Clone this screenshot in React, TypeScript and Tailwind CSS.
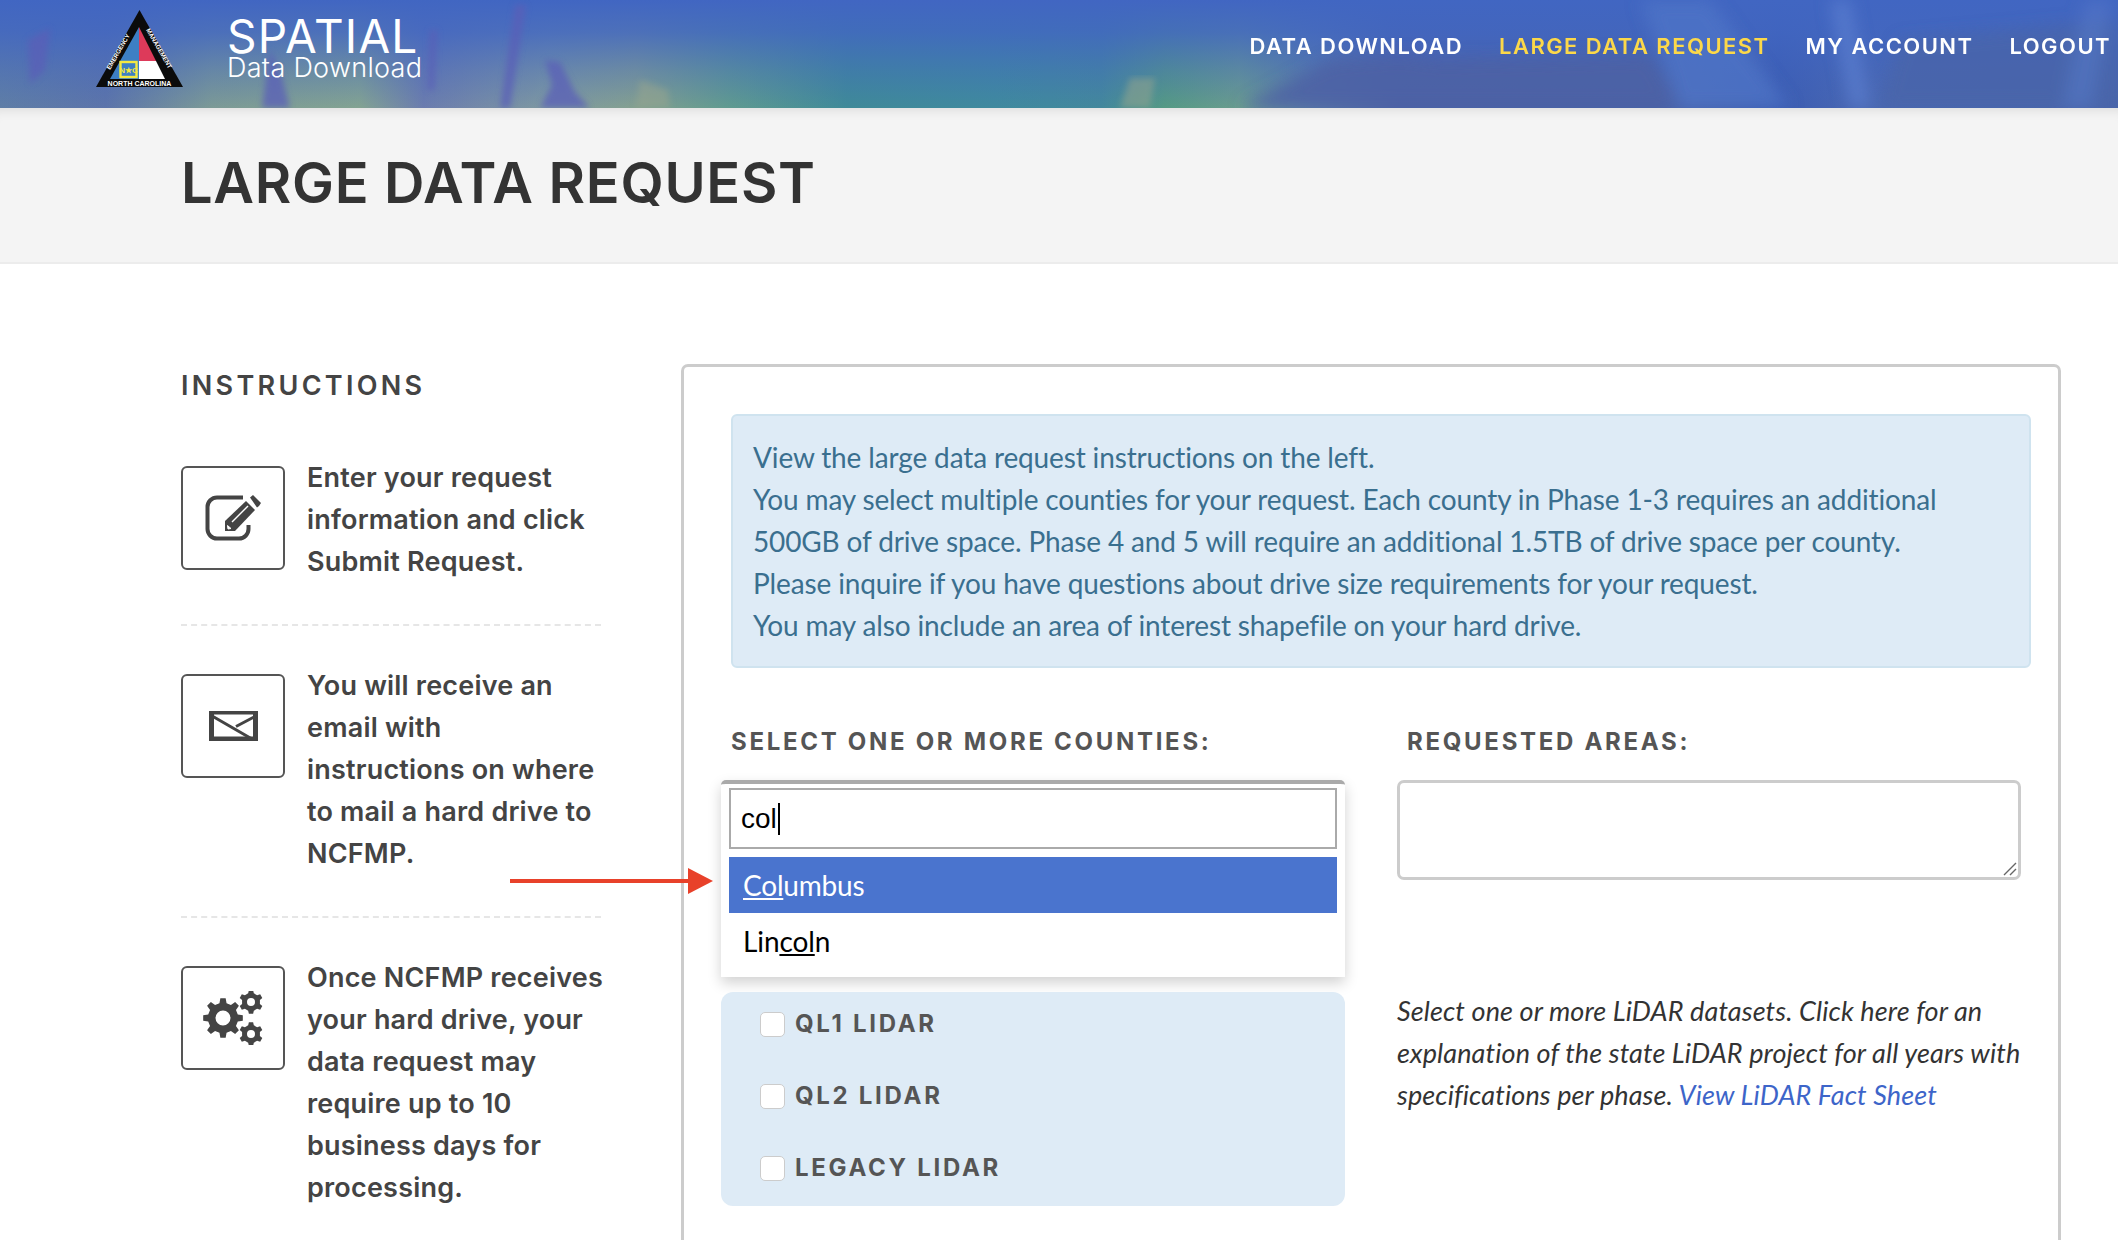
const steps = [
  { lines: ["Enter your request", "information and click", "Submit Request."], icon: "edit" },
  { lines: ["You will receive an", "email with", "instructions on where", "to mail a hard drive to", "NCFMP."], icon: "mail" },
  { lines: ["Once NCFMP receives", "your hard drive, your", "data request may", "require up to 10", "business days for", "processing."], icon: "gears" },
];

// gear outline with a hole, used by the third step icon
function gearPath(cx: number, cy: number, r: number, teeth: number, hole: number) {
  const inner = r * 0.76;
  const step = (Math.PI * 2) / teeth;
  const pts: string[] = [];
  for (let i = 0; i < teeth; i++) {
    const a = i * step - Math.PI / 2;
    const list: [number, number][] = [
      [inner, a - step * 0.3],
      [r, a - step * 0.17],
      [r, a + step * 0.17],
      [inner, a + step * 0.3],
    ];
    list.forEach(([rad, ang]) => pts.push(`${(cx + rad * Math.cos(ang)).toFixed(2)} ${(cy + rad * Math.sin(ang)).toFixed(2)}`));
  }
  return `M${pts.join("L")}Z M${cx - hole} ${cy}a${hole} ${hole} 0 1 0 ${hole * 2} 0a${hole} ${hole} 0 1 0 ${-hole * 2} 0Z`;
}

function HeaderTexture() {
  return (
    <svg className="absolute inset-0 w-full h-full" viewBox="0 0 2118 108" preserveAspectRatio="none">
      <defs>
        <filter id="b2"><feGaussianBlur stdDeviation="3" /></filter>
        <filter id="b6"><feGaussianBlur stdDeviation="8" /></filter>
        <linearGradient id="bottom" x1="0" y1="0" x2="1" y2="0">
          <stop offset="0" stopColor="#5f7ea6" />
          <stop offset="0.05" stopColor="#5c74aa" />
          <stop offset="0.1" stopColor="#7c9a96" />
          <stop offset="0.17" stopColor="#83a392" />
          <stop offset="0.2" stopColor="#6b7cae" />
          <stop offset="0.26" stopColor="#7f9aa0" />
          <stop offset="0.3" stopColor="#84a090" />
          <stop offset="0.345" stopColor="#5f9a90" />
          <stop offset="0.4" stopColor="#3f8a98" />
          <stop offset="0.47" stopColor="#3f8a9e" />
          <stop offset="0.52" stopColor="#43889c" />
          <stop offset="0.55" stopColor="#559a84" />
          <stop offset="0.585" stopColor="#6a9c8e" />
          <stop offset="0.62" stopColor="#5b7da6" />
          <stop offset="0.66" stopColor="#4c62a6" />
          <stop offset="0.78" stopColor="#4862a6" />
          <stop offset="0.8" stopColor="#4a66ae" />
          <stop offset="0.84" stopColor="#3b5cb2" />
          <stop offset="0.88" stopColor="#4a68b2" />
          <stop offset="1" stopColor="#4a66aa" />
        </linearGradient>
        <linearGradient id="topfade" x1="0" y1="0" x2="0" y2="1">
          <stop offset="0" stopColor="#4166c2" stopOpacity="1" />
          <stop offset="0.3" stopColor="#4166c2" stopOpacity="0.82" />
          <stop offset="0.65" stopColor="#4166c2" stopOpacity="0.38" />
          <stop offset="1" stopColor="#4166c2" stopOpacity="0" />
        </linearGradient>
      </defs>
      <rect width="2118" height="108" fill="url(#bottom)" />
      <rect width="2118" height="108" fill="url(#topfade)" />
      <g filter="url(#b2)" fill="#5a5fb8" opacity="0.75">
        <path d="M28 40 L50 28 L45 70 L30 84Z" />
        <path d="M430 30 L437 30 L434 90 L428 90Z" />
        <path d="M515 5 L526 5 L510 108 L500 108Z" />
        <path d="M545 60 L560 62 L575 92 L590 108 L540 108 L552 85Z" />
        <path d="M270 50 L280 70 L290 108 L262 108Z" />
      </g>
      <g filter="url(#b6)">
        <path d="M1240 108 L1330 60 L1400 55 L1440 60 L1650 55 L1680 108Z" fill="#4c62a4" opacity="0.85" />
        <path d="M1640 0 L1710 0 L1790 108 L1680 108Z" fill="#5075c8" opacity="0.7" />
        <path d="M1830 0 L1850 0 L1870 108 L1850 108Z" fill="#5c7fd0" opacity="0.7" />
        <path d="M1900 40 L2118 20 L2118 108 L1880 108Z" fill="#4a65a8" opacity="0.7" />
        <path d="M2085 0 L2112 0 L2092 108 L2062 108Z" fill="#5578c8" opacity="0.55" />
      </g>
      <g filter="url(#b2)" fill="#9aa68e" opacity="0.5">
        <path d="M1130 78 L1155 78 L1150 108 L1120 108Z" />
        <path d="M640 80 L668 90 L670 108 L636 108Z" />
      </g>
    </svg>
  );
}

function Logo() {
  return (
    <svg width="88" height="78" viewBox="0 0 88 78" className="shrink-0">
      <polygon points="43.5,0 87,77 0,77" fill="#0b0b0b" />
      <polygon points="43,17 43,69 14,69" fill="#3d7fc4" />
      <polygon points="43,17 43,51 60,51" fill="#dd3a5a" />
      <polygon points="43,51 60,51 69,69 43,69" fill="#fff" />
      <rect x="24.5" y="52" width="16" height="15" fill="#3d7fc4" stroke="#f4e842" strokeWidth="2.4" />
      <text x="32.5" y="62.5" fontSize="8" fontWeight="700" textAnchor="middle" fill="#f4e842" fontFamily="'Liberation Sans', sans-serif">N★C</text>
      <text x="43.5" y="75.5" fontSize="7" fontWeight="700" textAnchor="middle" fill="#fff" fontFamily="'Liberation Sans', sans-serif">NORTH CAROLINA</text>
      <text transform="translate(14 60) rotate(-60)" fontSize="6.2" fontWeight="700" fill="#fff" fontFamily="'Liberation Sans', sans-serif">EMERGENCY</text>
      <text transform="translate(50 20) rotate(60)" fontSize="6.2" fontWeight="700" fill="#fff" fontFamily="'Liberation Sans', sans-serif">MANAGEMENT</text>
    </svg>
  );
}

function StepIcon({ icon }: { icon: string }) {
  return (
    <div className="w-[104px] h-[104px] shrink-0 mt-[9px] border-2 border-[#555] rounded-[6px] flex items-center justify-center">
      {icon === "edit" && (
        <svg width="56" height="46" viewBox="0 0 56 46">
          <path d="M38 2.5H12A9.5 9.5 0 0 0 2.5 12V34A9.5 9.5 0 0 0 12 43.5H34A9.5 9.5 0 0 0 43.5 34V30" fill="none" stroke="#444" strokeWidth="4" />
          <path d="M20 26L41 6L50 15L30 36H20Z" fill="#444" />
          <path d="M45 2.5L48 0L56 8L54 11L52 12.5Z" fill="#444" />
          <path d="M27 27L43 11" stroke="#fff" strokeWidth="1.4" />
          <path d="M22.5 30.5L26 33.5L23 34Z" fill="#fff" stroke="#fff" strokeWidth="1" />
        </svg>
      )}
      {icon === "mail" && (
        <svg width="49" height="30" viewBox="0 0 49 30">
          <rect width="49" height="30" fill="#444" />
          <rect x="5" y="3.5" width="39" height="22" fill="#fff" />
          <path d="M4 5.5L43 28M45 6L27 15.5" stroke="#444" strokeWidth="3" fill="none" />
        </svg>
      )}
      {icon === "gears" && (
        <svg width="60" height="54" viewBox="0 0 60 54">
          <path fillRule="evenodd" fill="#444" d={gearPath(20, 27, 20, 8, 7.5)} />
          <path fillRule="evenodd" fill="#444" d={gearPath(48, 11, 12, 6, 4)} />
          <path fillRule="evenodd" fill="#444" d={gearPath(48, 43, 12, 6, 4)} />
        </svg>
      )}
    </div>
  );
}

export default function App() {
  return (
    <div className="h-[1240px] overflow-hidden relative bg-white font-['Inter',sans-serif]">
      <header className="relative h-[108px] overflow-hidden flex items-start text-white">
        <HeaderTexture />
        <div className="relative flex items-start pl-[96px] pt-[10px] gap-[43px]">
          <Logo />
          <div className="pt-[8px]">
            <div className="text-[46px] leading-[37px] font-normal tracking-[1.2px]">SPATIAL</div>
            <div className="text-[27px] leading-[25px] font-light tracking-[0.3px]">Data Download</div>
          </div>
        </div>
        <nav className="relative ml-auto pr-[7px] pt-[32px] flex gap-[36px] text-[22px] leading-[28px] font-semibold tracking-[1.45px]">
          <span>DATA DOWNLOAD</span>
          <span className="text-[#fcd849]">LARGE DATA REQUEST</span>
          <span>MY ACCOUNT</span>
          <span>LOGOUT</span>
        </nav>
      </header>

      <div className="h-[156px] bg-[#f4f4f4] border-b-2 border-[#ececec] pl-[181px] pt-[41px] shadow-[inset_0_12px_12px_-10px_rgba(0,0,0,0.1)]">
        <h1 className="text-[56px] leading-[68px] font-semibold text-[#333] tracking-[0.7px]">LARGE DATA REQUEST</h1>
      </div>

      <main className="flex pl-[181px] pt-[100px]">
        <aside className="w-[420px] shrink-0">
          <h2 className="text-[27px] leading-[44px] font-semibold text-[#444] tracking-[3.3px]">INSTRUCTIONS</h2>
          <div className="mt-[49px]">
            {steps.map((step, idx) => (
              <div key={idx} className={idx < 2 ? "flex gap-[22px] pb-[41px] mb-[39px] border-b-2 border-dashed border-[#e6e6e6]" : "flex gap-[22px]"}>
                <StepIcon icon={step.icon} />
                <div className="text-[27px] leading-[42px] font-semibold text-[#444] tracking-[0.2px] whitespace-nowrap">
                  {step.lines.map((l) => <div key={l}>{l}</div>)}
                </div>
              </div>
            ))}
          </div>
        </aside>

        <section className="ml-[80px] w-[1380px] h-[1000px] shrink-0 border-[3px] border-[#ccc] rounded-[7px] pl-[37px] pt-[47px] font-['Lato',sans-serif]">
          <div className="ml-[10px] w-[1300px] h-[254px] bg-[#deebf6] border-2 border-[#cfe3ef] rounded-[6px] pl-[20px] pt-[20px] text-[28px] leading-[42px] text-[#3a6f8f] tracking-[-0.14px] whitespace-nowrap">
            <div>View the large data request instructions on the left.</div>
            <div>You may select multiple counties for your request. Each county in Phase 1-3 requires an additional</div>
            <div>500GB of drive space. Phase 4 and 5 will require an additional 1.5TB of drive space per county.</div>
            <div>Please inquire if you have questions about drive size requirements for your request.</div>
            <div>You may also include an area of interest shapefile on your hard drive.</div>
          </div>

          <div className="flex gap-[52px] mt-[57px]">
            <div className="w-[624px] shrink-0">
              <div className="ml-[10px] h-[34px] text-[24px] leading-[34px] font-bold text-[#555] tracking-[2.7px] font-['Inter',sans-serif] whitespace-nowrap">SELECT ONE OR MORE COUNTIES:</div>
              <div className="mt-[21px] h-[197px] bg-white border-t-[4px] border-[#aaa] rounded-t-[5px] px-[8px] pt-[4px] shadow-[0_6px_14px_rgba(0,0,0,0.18)]">
                <div className="h-[61px] border-2 border-[#aaa] flex items-center pl-[10px] text-[28px] text-black font-['Liberation_Sans',sans-serif]">
                  col<span className="w-[2px] h-[32px] bg-black ml-[1px]" />
                </div>
                <div className="mt-[8px] h-[56px] bg-[#4a74ce] text-white flex items-center pl-[14px] text-[28px] tracking-[-0.2px]">
                  <span><u>Col</u>umbus</span>
                </div>
                <div className="h-[56px] text-black flex items-center pl-[14px] text-[28px] tracking-[-0.1px]">
                  <span>Lin<u>col</u>n</span>
                </div>
              </div>

              <div className="mt-[15px] h-[214px] bg-[#deebf6] rounded-[12px] pl-[39px] flex flex-col gap-[8px] font-['Inter',sans-serif]">
                {["QL1 LIDAR", "QL2 LIDAR", "LEGACY LIDAR"].map((name) => (
                  <label key={name} className="h-[64px] flex items-center gap-[10px] text-[24px] font-bold text-[#555] tracking-[2.7px]">
                    <span className="w-[25px] h-[25px] bg-white border border-[#ccc] rounded-[5px]" />
                    {name}
                  </label>
                ))}
              </div>
            </div>

            <div className="w-[624px] shrink-0">
              <div className="ml-[10px] h-[34px] text-[24px] leading-[34px] font-bold text-[#555] tracking-[2.7px] font-['Inter',sans-serif] whitespace-nowrap">REQUESTED AREAS:</div>
              <div className="relative mt-[21px]">
                <textarea className="block w-full h-[100px] border-[3px] border-[#ccc] rounded-[7px] bg-white resize-none" />
                <svg className="absolute right-[4px] bottom-[4px]" width="14" height="14" viewBox="0 0 14 14">
                  <path d="M1 13L13 1M7 13L13 7" stroke="#666" strokeWidth="1.4" fill="none" />
                </svg>
              </div>
              <p className="mt-[110px] text-[27px] leading-[42px] italic text-[#333] tracking-[0.12px] whitespace-nowrap">
                Select one or more LiDAR datasets. Click here for an<br />
                explanation of the state LiDAR project for all years with<br />
                specifications per phase. <a className="text-[#3d65c9]">View LiDAR Fact Sheet</a>
              </p>
            </div>
          </div>
        </section>
      </main>

      {/* red annotation arrow over the page */}
      <svg className="absolute left-[510px] top-[868px]" width="204" height="26" viewBox="0 0 204 26">
        <path d="M0 11h180v4H0z" fill="#e8412a" />
        <path d="M178 0 L203 13 L178 26Z" fill="#e8412a" />
      </svg>
    </div>
  );
}
